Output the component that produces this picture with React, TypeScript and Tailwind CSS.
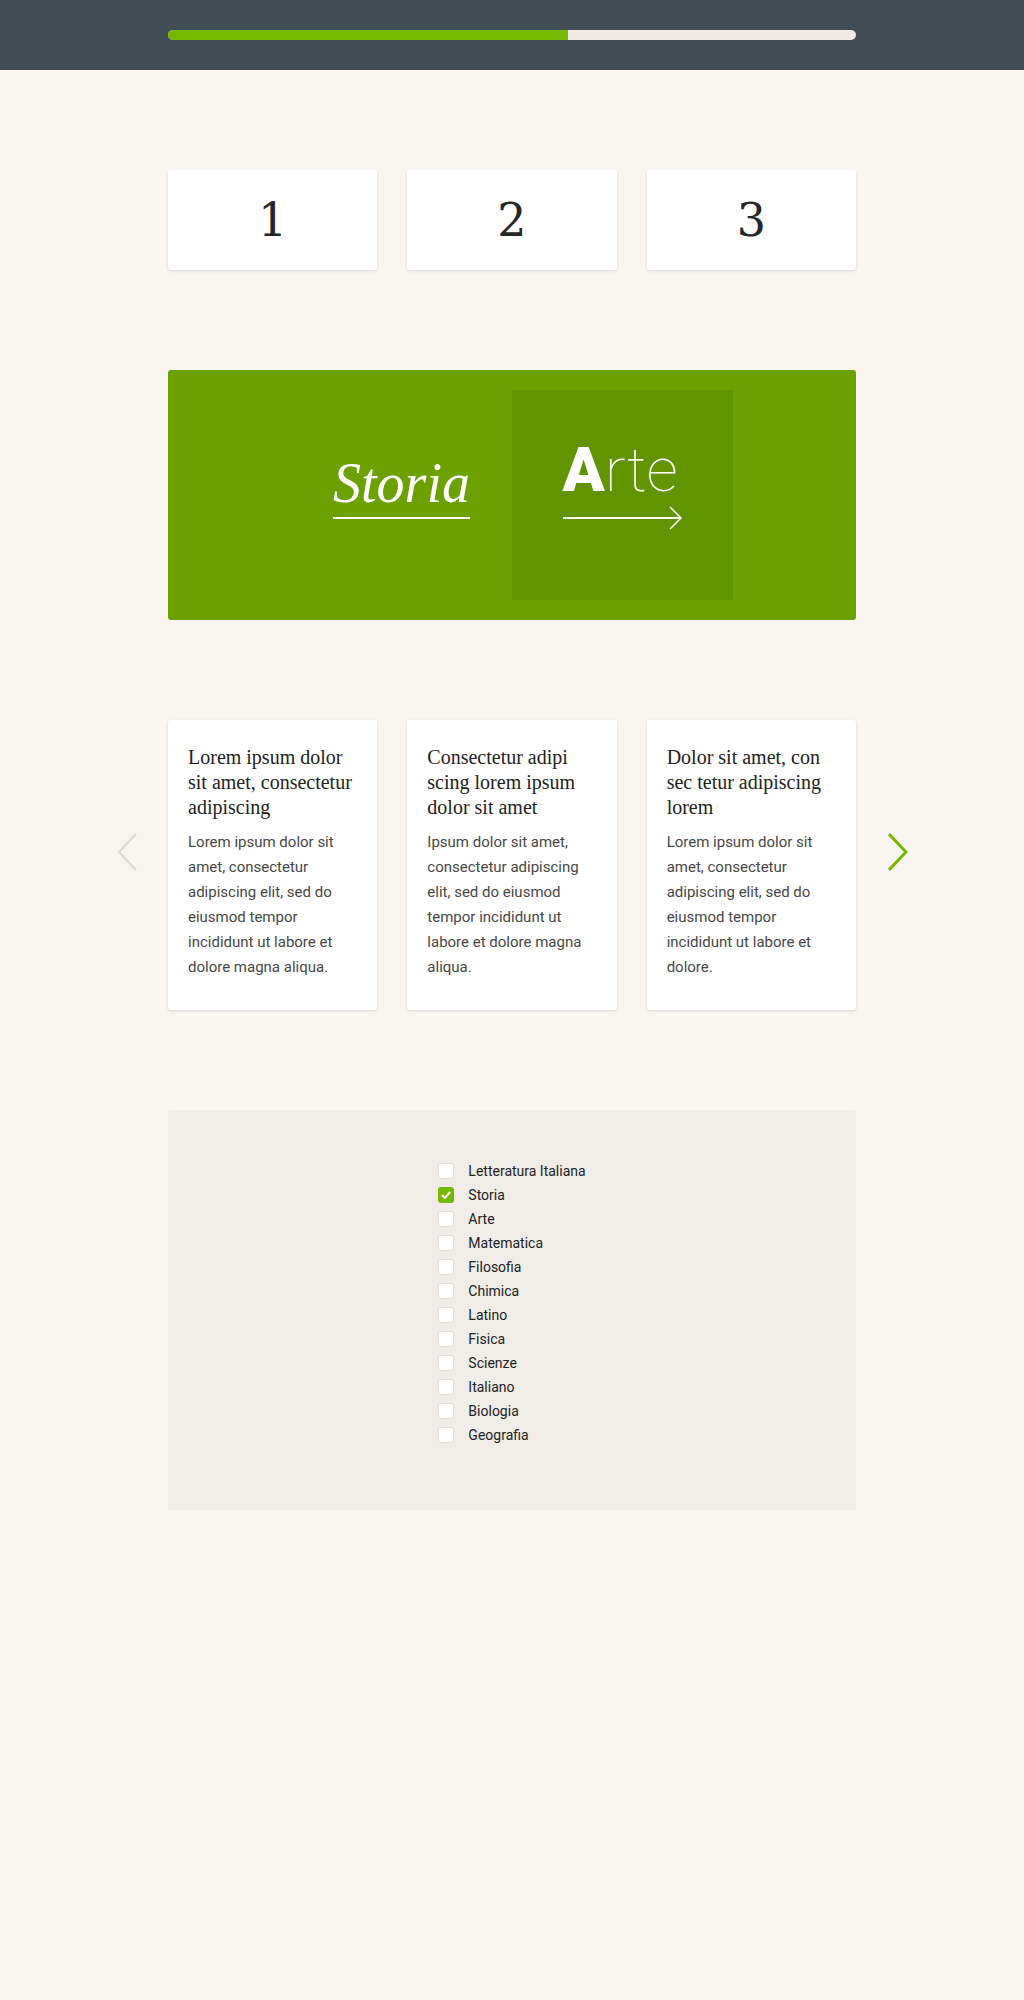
import React from "react";

const numbers = ["1", "2", "3"];

const cards = [
  {
    title: "Lorem ipsum dolor sit amet, consectetur adipiscing",
    body: "Lorem ipsum dolor sit amet, consectetur adipiscing elit, sed do eiusmod tempor incididunt ut labore et dolore magna aliqua.",
  },
  {
    title: "Consectetur adipi scing lorem ipsum dolor sit amet",
    body: "Ipsum dolor sit amet, consectetur adipiscing elit, sed do eiusmod tempor incididunt ut labore et dolore magna aliqua.",
  },
  {
    title: "Dolor sit amet, con sec tetur adipiscing lorem",
    body: "Lorem ipsum dolor sit amet, consectetur adipiscing elit, sed do eiusmod tempor incididunt ut labore et dolore.",
  },
];

const subjects = [
  "Letteratura Italiana",
  "Storia",
  "Arte",
  "Matematica",
  "Filosofia",
  "Chimica",
  "Latino",
  "Fisica",
  "Scienze",
  "Italiano",
  "Biologia",
  "Geografia",
];

export default function App() {
  return (
    <div className="min-h-[2000px] bg-[#f9f6f1] font-['Roboto',sans-serif]">
      <header className="h-[70px] bg-[#414d53] flex items-center">
        <div className="w-[688px] mx-auto h-[10px] rounded-full bg-[#efe9e3] overflow-hidden">
          <div className="w-[400px] h-full bg-[#76b900]" />
        </div>
      </header>

      <main className="w-[688px] mx-auto pt-[100px] flex flex-col gap-[100px]">
        <section className="grid grid-cols-3 gap-[30px]">
          {numbers.map((n) => (
            <div
              key={n}
              className="h-[100px] bg-white rounded-[3px] shadow-[0_1px_3px_rgba(0,0,0,0.12)] flex items-center justify-center font-['DejaVu_Serif',serif] text-[46px] leading-none text-[#262626]"
            >
              {n}
            </div>
          ))}
        </section>

        <section className="h-[250px] bg-[#6ca100] rounded-[3px] py-5 flex justify-center">
          <div className="w-[221px] flex flex-col items-center pt-[65px]">
            <div className="w-fit flex flex-col">
              <span className="font-['Liberation_Serif',serif] italic text-[56px] leading-none text-white">
                Storia
              </span>
              <div className="mt-[6px] h-[2px] w-full bg-white" />
            </div>
          </div>
          <div className="w-[221px] bg-[#629400] flex flex-col items-center pt-[49px]">
            <div className="w-fit flex flex-col">
              <span className="font-['Roboto',sans-serif] text-[62px] leading-none text-white">
                <span className="font-black">A</span>
                <span className="font-thin">rte</span>
              </span>
              <svg className="mt-[5px]" width="120" height="24" viewBox="0 0 120 24" fill="none">
                <line x1="0" y1="12" x2="118" y2="12" stroke="white" strokeWidth="2" />
                <polyline points="107,1 118,12 107,23" stroke="white" strokeWidth="1.5" fill="none" />
              </svg>
            </div>
          </div>
        </section>

        <section className="relative">
          <svg
            className="absolute left-[-51px] top-[113px]"
            width="20"
            height="38"
            viewBox="0 0 20 38"
            fill="none"
          >
            <polyline points="19,1 2,19 19,37" stroke="#dedad4" strokeWidth="2.5" fill="none" />
          </svg>
          <svg
            className="absolute right-[-52px] top-[113px]"
            width="20"
            height="38"
            viewBox="0 0 20 38"
            fill="none"
          >
            <polyline points="1,1 18,19 1,37" stroke="#76b900" strokeWidth="3" fill="none" />
          </svg>
          <div className="grid grid-cols-3 gap-[30px]">
            {cards.map((c, i) => (
              <div
                key={i}
                className="h-[290px] bg-white rounded-[3px] shadow-[0_1px_3px_rgba(0,0,0,0.12)] pt-[25px] px-5"
              >
                <h3 className="font-['Liberation_Serif',serif] text-[20px] leading-[25px] text-[#222]">
                  {c.title}
                </h3>
                <p className="mt-[10px] h-[145px] overflow-hidden text-[15px] leading-[25px] text-[#474747]">
                  {c.body}
                </p>
              </div>
            ))}
          </div>
        </section>

        <section className="h-[400px] bg-[#f0ede8] rounded-[2px] pt-[49px] flex justify-center">
          <ul className="flex flex-col">
            {subjects.map((s) => {
              const checked = s === "Storia";
              return (
                <li key={s} className="h-[24px] flex items-center gap-[14px]">
                  {checked ? (
                    <span className="w-4 h-4 rounded-[3px] bg-[#76b900] flex items-center justify-center">
                      <svg width="10" height="8" viewBox="0 0 10 8" fill="none">
                        <polyline points="1,4 4,7 9,1" stroke="white" strokeWidth="2" fill="none" />
                      </svg>
                    </span>
                  ) : (
                    <span className="w-4 h-4 rounded-[3px] bg-white border border-[#e2ded8]" />
                  )}
                  <span className="text-[14px] text-[#222]">{s}</span>
                </li>
              );
            })}
          </ul>
        </section>
      </main>
    </div>
  );
}
